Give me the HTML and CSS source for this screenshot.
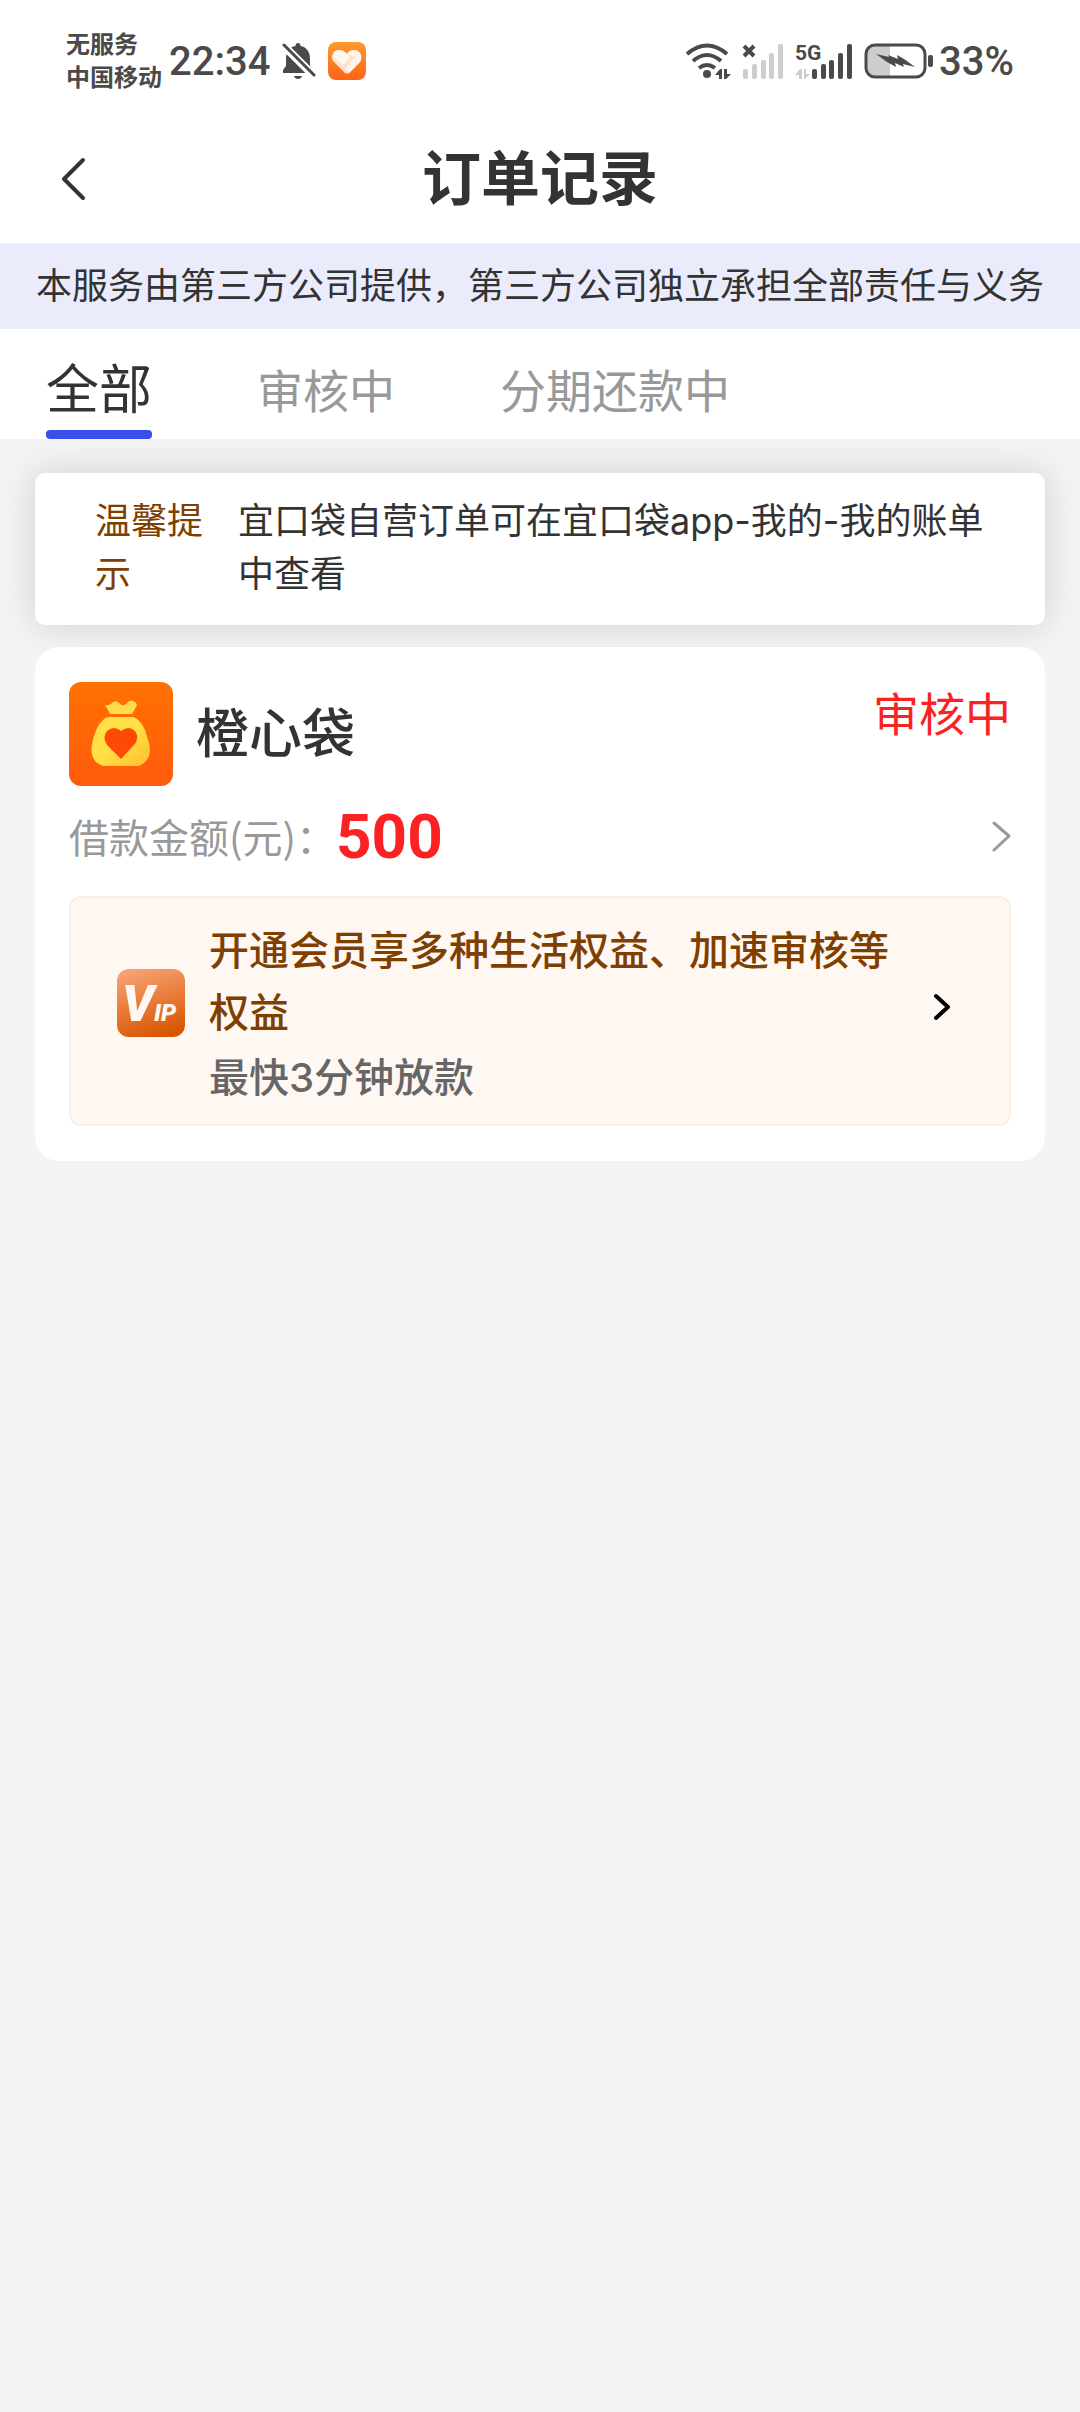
FILE: index.html
```
<!DOCTYPE html>
<html lang="zh-CN">
<head>
    <meta charset="UTF-8">
    <meta name="viewport" content="width=device-width, initial-scale=1.0">
    <title>订单记录</title>
    <link rel="stylesheet" href="styles.css">
</head>
<body>
    <div class="status-bar">
        <div class="status-left">
            <div class="carrier">
                <span>无服务</span>
                <span>中国移动</span>
            </div>
            <span class="time">22:34</span>
            <svg class="icon-bell" width="34" height="38" viewBox="0 0 34 38" fill="#4a4a4a">
                <path d="M1 31v-3l3-4V17C4 9 8 5 13.500 4C13.500 2 14.500 1 16 1s2.500 1 2.500 3C24 5 28 9 28 17v7l3 4v3z"/>
                <path d="M12 34h8c-1 4-7 4-8 0z"/>
                <path d="M0 2L33 35" stroke="#fff" stroke-width="8"/>
                <path d="M2 3L32 33" stroke="#4a4a4a" stroke-width="3" stroke-linecap="round"/>
            </svg>
            <svg class="icon-heart" width="38" height="38" viewBox="0 0 38 38">
                <defs>
                    <linearGradient id="heartBg" x1="0" y1="0" x2="0" y2="1">
                        <stop offset="0" stop-color="#ff9a2e"/>
                        <stop offset="1" stop-color="#fb6416"/>
                    </linearGradient>
                </defs>
                <rect width="38" height="38" rx="8" fill="url(#heartBg)"/>
                <path d="M19 12c3-5 9-5 12-2s3 8 0 11L21 31q-2 1-4 0L6 20c-3-3-3-7 0-10s9-3 13 2z" fill="#ffe1cb"/>
                <path d="M19 12c3-5 9-5 12-2s3 8 0 11L21 31l-4-4L27 15z" fill="#fff5ec"/>
                <path d="M6 10c3-3 9-3 13 2l3 4-7 7-9-7z" fill="#fff" opacity=".7"/>
            </svg>
        </div>
        <div class="status-right">
            <svg width="46" height="38" viewBox="0 0 46 38" fill="none" stroke="#4a4a4a" stroke-width="4">
                <path d="M2 12Q22-5 42 12"/>
                <path d="M8 19Q22 7 36 19"/>
                <path d="M14 26Q22 20 30 26"/>
                <circle cx="22" cy="32" r="4" fill="#4a4a4a" stroke="none"/>
                <path d="M30 33l5-6h2v10h-3v-4zM39 27h3v5h4l-5 5h-2z" fill="#4a4a4a" stroke="none"/>
            </svg>
            <svg width="42" height="38" viewBox="0 0 42 38" fill="#cdcdcd">
                <path d="M2 4L12 14M12 4L2 14" stroke="#4a4a4a" stroke-width="4"/>
                <rect x="1" y="27" width="5" height="10" rx="2"/>
                <rect x="10" y="22" width="5" height="15" rx="2"/>
                <rect x="19" y="18" width="5" height="19" rx="2"/>
                <rect x="27" y="11" width="5" height="26" rx="2"/>
                <rect x="36" y="2" width="5" height="35" rx="2"/>
            </svg>
            <svg width="58" height="38" viewBox="0 0 58 38" fill="#4a4a4a">
                <text class="net-type" x="0" y="18">5G</text>
                <path d="M0 33l5-6h2v10H4v-4zM9 27h2v5h4l-5 5H9z" fill="#cdcdcd"/>
                <rect x="17" y="27" width="5" height="10" rx="2"/>
                <rect x="26" y="22" width="5" height="15" rx="2"/>
                <rect x="34" y="18" width="5" height="19" rx="2"/>
                <rect x="43" y="11" width="5" height="26" rx="2"/>
                <rect x="52" y="2" width="5" height="35" rx="2"/>
            </svg>
            <svg width="70" height="38" viewBox="0 0 70 38">
                <path d="M11 4H26V34H11Q3 34 3 26V12Q3 4 11 4z" fill="#cdcdcd"/>
                <rect x="2" y="3" width="59" height="32" rx="9" fill="none" stroke="#4a4a4a" stroke-width="3"/>
                <rect x="64" y="13" width="5" height="12" rx="2" fill="#4a4a4a"/>
                <path d="M12 12l13 3-1-2 10 4-1-4 7 4 11 8-12-3 1 3-9-4 1 4-9-5z" fill="#4a4a4a"/>
            </svg>
            <span class="battery-level">33%</span>
        </div>
    </div>

    <header class="nav-bar">
        <button class="back" type="button" aria-label="返回">
            <svg width="26" height="44" viewBox="0 0 26 44" fill="none" stroke="#333" stroke-width="4" stroke-linecap="round" stroke-linejoin="round">
                <path d="M23 3L4 22L23 41"/>
            </svg>
        </button>
        <h1>订单记录</h1>
    </header>

    <p class="notice">本服务由第三方公司提供，第三方公司独立承担全部责任与义务</p>

    <nav class="tabs">
        <button class="tab active" type="button">全部</button>
        <button class="tab" type="button">审核中</button>
        <button class="tab" type="button">分期还款中</button>
    </nav>

    <main>
        <section class="tip">
            <span class="tip-label">温馨提示</span>
            <p class="tip-text">宜口袋自营订单可在宜口袋app-我的-我的账单中查看</p>
        </section>

        <section class="order">
            <div class="order-head">
                <svg class="order-logo" width="104" height="104" viewBox="0 0 104 104">
                    <defs>
                        <linearGradient id="logoBg" x1="0" y1="0" x2="0" y2="1">
                            <stop offset="0" stop-color="#ff7200"/>
                            <stop offset="1" stop-color="#ff5a0e"/>
                        </linearGradient>
                        <linearGradient id="bagFill" x1="0" y1="0" x2="1" y2="1">
                            <stop offset="0" stop-color="#ffe04a"/>
                            <stop offset=".5" stop-color="#ffe045"/>
                            <stop offset="1" stop-color="#ffbe2e"/>
                        </linearGradient>
                    </defs>
                    <rect width="104" height="104" rx="12" fill="url(#logoBg)"/>
                    <path d="M37 23q4 1 7-3 3-2 6 1 5 5 9-1 3-3 7 0 3 2 1 5l-4 7H41l-3-6q-3-2-1-3z" fill="#ffdc4a"/>
                    <path d="M40 35H64Q71 37 76 48L80 61Q84 78 70 84H34Q20 79 23 62Q26 45 35 37Q37 35 40 35z" fill="url(#bagFill)"/>
                    <path d="M52 49q8-6 14 0 5 7-1 14L52 77 38 63q-5-8 0-14 7-6 14 0z" fill="#ff4a05"/>
                </svg>
                <h2>橙心袋</h2>
                <span class="order-status">审核中</span>
            </div>
            <a class="order-amount" href="#">
                <span class="amount-label">借款金额(元)：</span>
                <strong>500</strong>
                <svg width="20" height="32" viewBox="0 0 20 32" fill="none" stroke="#999" stroke-width="3" stroke-linecap="round" stroke-linejoin="round">
                    <path d="M3 3L18 16L3 30"/>
                </svg>
            </a>
            <a class="vip" href="#">
                <svg class="vip-icon" width="68" height="68" viewBox="0 0 68 68">
                    <defs>
                        <linearGradient id="vipBg" x1=".3" y1="0" x2=".6" y2="1">
                            <stop offset="0" stop-color="#f6a172"/>
                            <stop offset="1" stop-color="#d95600"/>
                        </linearGradient>
                    </defs>
                    <rect width="68" height="68" rx="12" fill="url(#vipBg)"/>
                    <text class="vip-mark" x="5" y="52">V<tspan class="vip-small">IP</tspan></text>
                </svg>
                <div class="vip-text">
                    <p class="vip-title">开通会员享多种生活权益、加速审核等权益</p>
                    <p class="vip-desc">最快3分钟放款</p>
                </div>
                <svg class="vip-arrow" width="18" height="28" viewBox="0 0 18 28" fill="none" stroke="#000" stroke-width="4" stroke-linecap="round" stroke-linejoin="round">
                    <path d="M3 3L15 14L3 25"/>
                </svg>
            </a>
        </section>
    </main>
</body>
</html>
```
FILE: styles.css
```
:root {
    --text-color: #333;
    --muted-color: #999;
    --status-color: #4a4a4a;
    --primary-color: #3850e8;
    --danger-color: #fa2222;
    --brown-color: #7f3f00;
    --background-color: #f3f3f3;
}

* {
    margin: 0;
    padding: 0;
    box-sizing: border-box;
}

body {
    font-family: Inter, "Noto Sans CJK SC", sans-serif;
    font-size: 36px;
    background-color: var(--background-color);
    color: var(--text-color);
}

svg {
    display: block;
    flex-shrink: 0;
}

button {
    background: none;
    border: none;
    font-family: inherit;
    color: inherit;
    cursor: pointer;
}

a {
    color: inherit;
    text-decoration: none;
}

/* Barra de estado */
.status-bar {
    display: flex;
    justify-content: space-between;
    align-items: center;
    height: 114px;
    padding: 8px 66px 0;
    background-color: white;
    color: var(--status-color);
}

.status-left,
.status-right {
    display: flex;
    align-items: center;
}

.status-right {
    gap: 11px;
}

.carrier {
    display: flex;
    flex-direction: column;
    font-size: 24px;
    font-weight: 700;
    line-height: 33px;
}

.time,
.battery-level {
    font-family: Roboto, sans-serif;
    font-size: 40px;
    font-weight: 500;
}

.time {
    margin: 0 12px 0 7px;
}

.icon-heart {
    margin-left: 12px;
}

.battery-level {
    margin-left: -6px;
}

.net-type {
    font-family: Roboto, sans-serif;
    font-size: 21px;
    font-weight: 700;
}

/* Cabecera */
.nav-bar {
    display: grid;
    grid-template-columns: 86px 1fr 86px;
    align-items: center;
    height: 129px;
    background-color: white;
}

.back {
    justify-self: end;
}

h1 {
    font-size: 59px;
    font-weight: 700;
    line-height: 84px;
    text-align: center;
}

.notice {
    background-color: #eaecfc;
    line-height: 86px;
    text-align: center;
    white-space: nowrap;
}

.tabs {
    display: flex;
    align-items: flex-end;
    gap: 105px;
    height: 110px;
    padding: 0 46px;
    background-color: white;
}

.tab {
    border-bottom: 9px solid transparent;
    padding-bottom: 5px;
    font-size: 46px;
    line-height: 68px;
    color: var(--muted-color);
}

.tab.active {
    position: relative;
    font-size: 53px;
    line-height: 70px;
    color: var(--text-color);
}

.tab.active::after {
    content: "";
    position: absolute;
    left: 0;
    right: 0;
    bottom: -9px;
    height: 9px;
    border-radius: 4px;
    background-color: var(--primary-color);
}

main {
    padding: 34px 35px;
}

.tip {
    display: flex;
    gap: 34px;
    padding: 22px 44px 24px 60px;
    border-radius: 10px;
    background-color: white;
    box-shadow: 0 0 36px rgba(0, 0, 0, 0.14);
    line-height: 53px;
}

.tip-label {
    flex: 0 0 109px;
    color: var(--brown-color);
}

.tip-text {
    flex: 1;
}

/* Pedido */
.order {
    position: relative;
    margin-top: 22px;
    padding: 35px 34px;
    border-radius: 24px;
    background-color: white;
}

.order-head {
    display: flex;
    align-items: center;
    gap: 23px;
}

h2 {
    font-size: 53px;
    font-weight: 500;
    line-height: 72px;
}

.order-status {
    align-self: flex-start;
    margin-left: auto;
    font-size: 46px;
    line-height: 64px;
    color: var(--danger-color);
}

.order-amount {
    display: flex;
    align-items: center;
    height: 100px;
    margin-bottom: 10px;
}

.amount-label {
    font-family: "Noto Sans CJK SC", sans-serif;
    font-size: 40px;
    color: var(--muted-color);
}

.order-amount strong {
    font-family: Roboto, sans-serif;
    font-size: 62px;
    color: var(--danger-color);
}

.order-amount svg {
    margin-left: auto;
}

.vip {
    display: flex;
    align-items: center;
    padding: 22px 58px 15px 46px;
    border: 2px solid #fdeee2;
    border-radius: 12px;
    background-color: #fff7f2;
    font-size: 40px;
    font-weight: 500;
    line-height: 62px;
}

.vip-icon {
    margin: 0 24px 24px 0;
}

.vip-text {
    flex: 1;
}

.vip-title {
    color: var(--brown-color);
}

.vip-desc {
    margin-top: 3px;
    color: #666;
}

.vip-arrow {
    margin: 0 0 16px 44px;
}

.vip-mark {
    font-family: Roboto, sans-serif;
    font-size: 50px;
    font-style: italic;
    font-weight: 900;
    fill: #fff8f0;
}

.vip-small {
    font-size: 24px;
}
```
